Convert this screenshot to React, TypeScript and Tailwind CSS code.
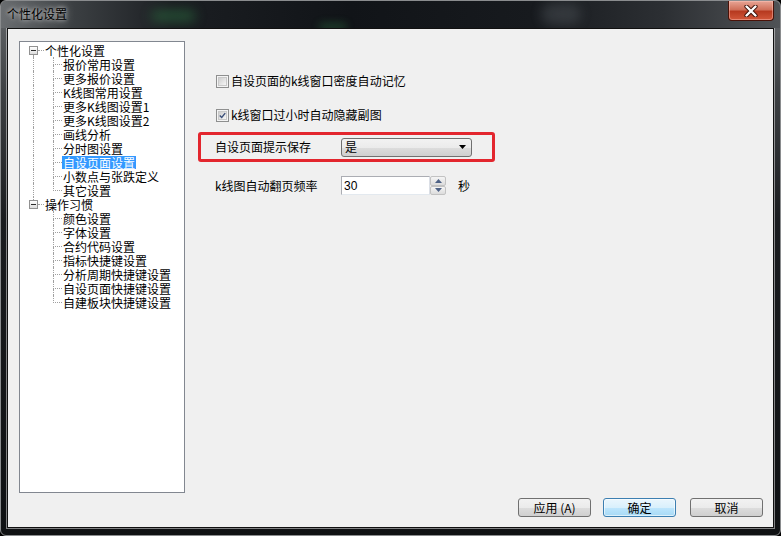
import React from "react";

const dot = "border-dotted border-[#a0a0a0]";

type Item = {
  label: string;
  kind: "root" | "child";
  above?: boolean;
  below?: boolean;
  topLine?: boolean;
  last?: boolean;
  selected?: boolean;
};

const tree: Item[] = [
  { label: "个性化设置", kind: "root", below: true },
  { label: "报价常用设置", kind: "child", topLine: true },
  { label: "更多报价设置", kind: "child", topLine: true },
  { label: "K线图常用设置", kind: "child", topLine: true },
  { label: "更多K线图设置1", kind: "child", topLine: true },
  { label: "更多K线图设置2", kind: "child", topLine: true },
  { label: "画线分析", kind: "child", topLine: true },
  { label: "分时图设置", kind: "child", topLine: true },
  { label: "自设页面设置", kind: "child", topLine: true, selected: true },
  { label: "小数点与张跌定义", kind: "child", topLine: true },
  { label: "其它设置", kind: "child", topLine: true, last: true },
  { label: "操作习惯", kind: "root", above: true },
  { label: "颜色设置", kind: "child" },
  { label: "字体设置", kind: "child" },
  { label: "合约代码设置", kind: "child" },
  { label: "指标快捷键设置", kind: "child" },
  { label: "分析周期快捷键设置", kind: "child" },
  { label: "自设页面快捷键设置", kind: "child" },
  { label: "自建板块快捷键设置", kind: "child", last: true },
];

const ExpandBox = () => (
  <div className="flex h-[9px] w-[9px] shrink-0 items-center justify-center border border-[#919191] bg-gradient-to-b from-white to-[#dcdcdc]">
    <div className="h-px w-[5px] bg-[#2b2b2b]" />
  </div>
);

const TreeRow = ({ item }: { item: Item }) => {
  const label = (
    <span
      className={`whitespace-nowrap px-px text-[12px] leading-[13px] ${
        item.selected ? "bg-[#3399ff] text-white" : "text-black"
      }`}
    >
      {item.label}
    </span>
  );

  if (item.kind === "root") {
    return (
      <div className="flex h-[14px] items-stretch">
        <div className="w-[9px]" />
        <div className="flex w-[9px] flex-col items-center">
          <div className={`h-[3px] w-0 ${item.above ? `border-l ${dot}` : ""}`} />
          <ExpandBox />
          <div className={`w-0 flex-1 ${item.below ? `border-l ${dot}` : ""}`} />
        </div>
        <div className="flex w-[6px] items-center pt-px">
          <div className={`h-0 w-full border-t ${dot}`} />
        </div>
        <div className="flex items-center">{label}</div>
      </div>
    );
  }

  return (
    <div className="flex h-[14px] items-stretch">
      <div className="w-[9px]" />
      <div className="flex w-[9px] justify-center">
        {item.topLine && <div className={`h-full w-0 border-l ${dot}`} />}
      </div>
      <div className="w-[15px]" />
      <div className="flex w-[9px] flex-col">
        <div className={`h-[8px] border-b border-l ${dot}`} />
        <div className={`flex-1 ${item.last ? "" : `border-l ${dot}`}`} />
      </div>
      <div className="flex items-center">{label}</div>
    </div>
  );
};

const CheckBox = ({ checked }: { checked?: boolean }) => (
  <div className="flex h-[13px] w-[13px] shrink-0 items-center justify-center border border-[#8e8f8f] bg-[#f4f4f4]">
    <div className="flex h-[9px] w-[9px] items-center justify-center border border-[#c9c9c9] bg-gradient-to-br from-[#cfcfcf] to-[#f6f6f6]">
      {checked && (
        <svg width="9" height="9" viewBox="0 0 9 9">
          <path d="M1 4.5 L3.5 7 L8 1.5" fill="none" stroke="#3b4f7a" strokeWidth="1.8" />
        </svg>
      )}
    </div>
  </div>
);

const btn =
  "h-[19px] w-[73px] rounded-[3px] border text-[12px] leading-none text-black";

export default function App() {
  return (
    <div className="h-[536px] w-[781px] bg-black font-['Noto_Sans_CJK_SC',sans-serif]">
      <div className="flex h-full w-full flex-col rounded-[6px] border border-[#8a8c8e] bg-[linear-gradient(#676a6d,#3e4144_90px,#1a1c1f_220px,#0f1113)]">
        {/* title bar */}
        <div className="relative h-[27px] overflow-hidden rounded-t-[6px] bg-[linear-gradient(90deg,#6a6d70_0%,#3c4043_9%,#1b1e22_22%,#111418_45%,#171a1e_68%,#2c2f33_85%,#505356_100%)]">
          <div className="absolute left-[150px] top-[9px] h-[12px] w-[45px] rounded-full bg-[#2f7a45] opacity-50 blur-[6px]" />
          <div className="absolute left-[318px] top-[22px] h-[8px] w-[28px] rounded-full bg-[#2f7a45] opacity-40 blur-[4px]" />
          <div className="absolute left-[540px] top-[2px] h-[22px] w-[40px] rounded-full bg-[#6b7278] opacity-30 blur-[6px]" />
          <div className="absolute left-[6px] top-[6px] text-[12px] leading-[14px] text-black [text-shadow:0_0_4px_rgba(255,255,255,0.8),0_0_10px_rgba(255,255,255,0.5)]">
            个性化设置
          </div>
          <div className="absolute right-[6px] top-0 flex h-[20px] w-[46px] items-center justify-center rounded-b-[4px] border border-t-0 border-[#4a1208] bg-[linear-gradient(#e8a595,#d0705a_45%,#b73a20_55%,#d2573a)] shadow-[inset_0_0_0_1px_rgba(255,200,190,0.45)]">
            <svg width="14" height="12" viewBox="0 0 14 12">
              <path d="M2.5 1.5 L11.5 10.5 M11.5 1.5 L2.5 10.5" stroke="#3a1008" strokeWidth="4.2" strokeLinecap="round" />
              <path d="M2.5 1.5 L11.5 10.5 M11.5 1.5 L2.5 10.5" stroke="#ffffff" strokeWidth="2.4" strokeLinecap="round" />
            </svg>
          </div>
        </div>

        {/* client area */}
        <div className="mx-[6px] mb-[7px] flex h-[500px] flex-col border border-[#101010] bg-[#f0f0f0] shadow-[0_0_0_1px_rgba(220,220,220,0.55)]">
          <div className="flex">
            {/* tree */}
            <div className="ml-[11px] mt-[12px] h-[452px] w-[166px] border border-[#828790] bg-white pt-px">
              {tree.map((item) => (
                <TreeRow key={item.label} item={item} />
              ))}
            </div>

            {/* settings */}
            <div className="ml-[13px] mt-[45px] flex flex-col text-[12px] leading-[14px] text-black">
              <div className="ml-[18px] flex h-[14px] items-center gap-[2px]">
                <CheckBox />
                <span>自设页面的k线窗口密度自动记忆</span>
              </div>
              <div className="ml-[18px] mt-[20px] flex h-[14px] items-center gap-[2px]">
                <CheckBox checked />
                <span>k线窗口过小时自动隐藏副图</span>
              </div>
              <div className="mt-[10px] flex h-[30px] w-[297px] items-center rounded-[3px] border-[3px] border-[#e3262e] pl-[14px]">
                <span className="w-[126px]">自设页面提示保存</span>
                <div className="flex h-[19px] w-[131px] items-center justify-between rounded-[3px] border border-[#707070] bg-[linear-gradient(#f2f2f2,#ebebeb_50%,#dddddd_50%,#cfcfcf)] pl-[3px] pr-[5px]">
                  <span>是</span>
                  <svg width="7" height="4" viewBox="0 0 7 4">
                    <path d="M0 0 H7 L3.5 4 Z" fill="#000" />
                  </svg>
                </div>
              </div>
              <div className="ml-[17px] mt-[14px] flex h-[19px] items-center">
                <span className="w-[126px]">k线图自动翻页频率</span>
                <div className="flex h-[19px] w-[89px] items-center border border-[#abadb3] border-b-[#e3e9ef] border-r-[#dbdfe6] bg-white pl-[2px] font-['Liberation_Sans',sans-serif]">
                  30
                </div>
                <div className="flex h-[19px] w-[16px] flex-col">
                  <div className="flex flex-1 items-center justify-center rounded-[2px] border border-[#c2c2c2] bg-gradient-to-b from-[#f5f5f5] to-[#dcdcdc]">
                    <svg width="7" height="4" viewBox="0 0 7 4">
                      <path d="M0 4 H7 L3.5 0 Z" fill="#4d6185" />
                    </svg>
                  </div>
                  <div className="flex flex-1 items-center justify-center rounded-[2px] border border-[#c2c2c2] bg-gradient-to-b from-[#f5f5f5] to-[#dcdcdc]">
                    <svg width="7" height="4" viewBox="0 0 7 4">
                      <path d="M0 0 H7 L3.5 4 Z" fill="#4d6185" />
                    </svg>
                  </div>
                </div>
                <span className="ml-[12px]">秒</span>
              </div>
            </div>
          </div>

          {/* buttons */}
          <div className="mr-[10px] mt-[5px] flex justify-end">
            <button className={`${btn} border-[#707070] bg-[linear-gradient(#f2f2f2,#ebebeb_50%,#dddddd_50%,#cfcfcf)]`}>
              应用 (A)
            </button>
            <button className={`${btn} ml-[12px] w-[72px] border-[#3c7fb1] bg-[linear-gradient(#eaf6fd,#d9f0fc_50%,#bee6fd_50%,#a7d9f5)] shadow-[inset_0_0_0_1px_rgba(255,255,255,0.6)]`}>
              确定
            </button>
            <button className={`${btn} ml-[14px] border-[#707070] bg-[linear-gradient(#f2f2f2,#ebebeb_50%,#dddddd_50%,#cfcfcf)]`}>
              取消
            </button>
          </div>
        </div>
      </div>
    </div>
  );
}
